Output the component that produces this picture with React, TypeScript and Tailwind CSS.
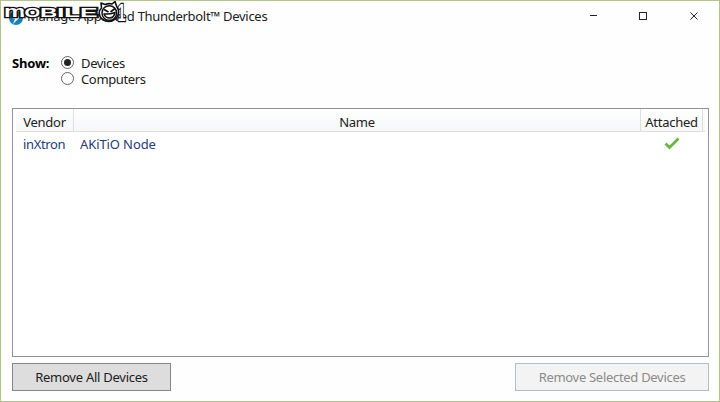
import { useState } from "react";

const logoLetters = [
  { char: "m", x: 4, width: 21 },
  { char: "O", x: 24.5, width: 15.5 },
  { char: "B", x: 40, width: 17 },
  { char: "I", x: 57, width: 7 },
  { char: "L", x: 64, width: 16 },
  { char: "E", x: 80, width: 17 },
];

function Logo() {
  return (
    <svg className="absolute -left-px -top-px" width="130" height="28" viewBox="0 0 130 28">
      <g
        fontFamily="'Liberation Sans', sans-serif"
        fontWeight="700"
        fill="white"
        stroke="#111"
        strokeWidth="2.4"
        paintOrder="stroke"
      >
        {logoLetters.map((l) => (
          <text
            key={l.char}
            x={l.x}
            y="17"
            fontSize={l.char === "m" ? 17 : 13}
            textLength={l.width}
            lengthAdjust="spacingAndGlyphs"
          >
            {l.char}
          </text>
        ))}
        <text x="117.5" y="20.5" fontSize="23" textLength="8" lengthAdjust="spacingAndGlyphs">
          1
        </text>
      </g>
      <g stroke="#111" strokeLinejoin="round">
        <path d="M101.500 8 L101 3 L105 4.500 Q109 3 112 4 L115 1.500 L116.500 6 Q121 13 116 18.500 Q109 24 102 19 Q96.500 13 101.500 8Z" fill="white" strokeWidth="1.600" />
        <circle cx="109.300" cy="13" r="7.300" fill="white" strokeWidth="1.500" />
        <path d="M104 9.500 L108.500 12 M115 8.500 L110.500 12" fill="none" strokeWidth="1.600" />
        <path d="M104 14 Q110 14.500 115 12.500 Q114 18 109.500 18 Q105.500 18 104 14Z" fill="white" strokeWidth="1.500" />
      </g>
    </svg>
  );
}

function TitleBar() {
  return (
    <header className="relative flex h-[30px] items-center">
      <svg className="ml-[7px] mt-[3px]" width="16" height="16" viewBox="0 0 16 16">
        <circle cx="8" cy="8" r="7" fill="#1681bd" />
        <path d="M9 2 L4 8 L7 9 L5 14 L12 7 L8.500 6Z" fill="white" />
      </svg>
      <span className="ml-[3px] text-[13px] tracking-[-0.3px]">Manage Approved Thunderbolt™ Devices</span>
      <svg className="ml-auto mr-[18px] -mt-[2px]" width="112" height="12" viewBox="0 0 112 12" fill="none" stroke="#222">
        <path d="M1 6.500H8" />
        <rect x="50.500" y="3.500" width="7" height="7" />
        <path d="M101.500 3.500L108.500 10.500M108.500 3.500L101.500 10.500" />
      </svg>
      <Logo />
    </header>
  );
}

function Radio({ label, checked, onSelect }: { label: string; checked: boolean; onSelect: () => void }) {
  return (
    <button className="flex h-[16.500px] items-center gap-[7px]" role="radio" aria-checked={checked} onClick={onSelect}>
      <span className="flex size-[13px] items-center justify-center rounded-full border border-[#666]">
        {checked && <span className="size-[7px] rounded-full bg-[#222]" />}
      </span>
      <span className="pt-px tracking-[-0.35px]">{label}</span>
    </button>
  );
}

export default function App() {
  const [show, setShow] = useState("Devices");
  return (
    <main className="flex h-[402px] w-[720px] flex-col overflow-hidden border border-[#b3c58c] bg-[#fefefe] font-['Noto_Sans','Open_Sans',sans-serif] text-[13px] leading-[16px] tracking-[-0.25px] text-[#202020]">
      <TitleBar />
      <section className="ml-[11px] mt-[24px] flex h-[33px]">
        <span className="w-[49px] font-bold tracking-[-0.2px] text-black">Show:</span>
        <div role="radiogroup" className="-mt-px">
          {["Devices", "Computers"].map((item) => (
            <Radio key={item} label={item} checked={show === item} onSelect={() => setShow(item)} />
          ))}
        </div>
      </section>
      <section className="ml-[11px] mr-[10px] mt-[20px] h-[249px] shrink-0 border border-[#92939a] bg-white px-[3px]">
        <div className="grid h-[23px] grid-cols-[58px_567px_62px_1fr] items-stretch overflow-hidden border-b border-[#dedede] bg-gradient-to-b from-white to-[#f6f7f8] text-center leading-[26px]">
          <span className="border-r border-[#dedede]">Vendor</span>
          <span className="border-r border-[#dedede]">Name</span>
          <span className="border-r border-[#dedede]">Attached</span>
        </div>
        <div className="grid h-[23px] grid-cols-[58px_567px_62px_1fr] items-center text-[#243b77]">
          <span className="pl-[7px] tracking-[-0.35px]">inXtron</span>
          <span className="pl-[6px] tracking-[-0.1px]">AKiTiO Node</span>
          <svg className="mx-auto" width="16" height="14" viewBox="0 0 16 14" fill="none">
            <path d="M1.500 6.500L5.500 10.500L14.500 1.500" stroke="#65b83b" strokeWidth="2.700" />
          </svg>
        </div>
      </section>
      <footer className="ml-[11px] mr-[10px] mt-[6px] flex h-[28px] shrink-0 justify-between">
        <button className="w-[159px] border border-[#858585] bg-[#dddddd]">Remove All Devices</button>
        <button className="w-[194px] border border-[#b7bcc0] bg-[#f3f3f3] tracking-[-0.3px] text-[#8b8b8b]" disabled>
          Remove Selected Devices
        </button>
      </footer>
    </main>
  );
}
